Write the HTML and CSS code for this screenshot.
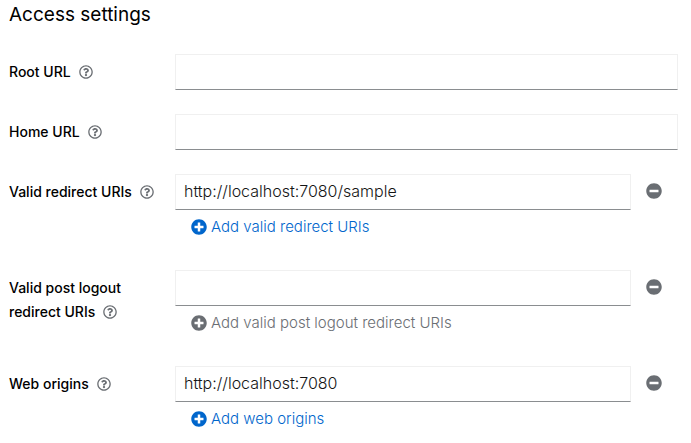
FILE: index.html
```html
<!DOCTYPE html>
<html lang="en">
<head>
<meta charset="utf-8">
<title>Access settings</title>
<link rel="stylesheet" href="styles.css">
</head>
<body>
<svg class="sprite" aria-hidden="true">
  <symbol id="help" viewBox="0 0 512 512"><path d="M256 8C119.043 8 8 119.083 8 256c0 136.997 111.043 248 248 248s248-111.003 248-248C504 119.083 392.957 8 256 8zm0 448c-110.532 0-200-89.431-200-200 0-110.495 89.472-200 200-200 110.491 0 200 89.471 200 200 0 110.53-89.431 200-200 200zm107.244-255.2c0 67.052-72.421 68.084-72.421 92.863V300c0 6.627-5.373 12-12 12h-45.647c-6.627 0-12-5.373-12-12v-8.659c0-35.745 27.1-50.034 47.579-61.516 17.561-9.845 28.324-16.541 28.324-29.579 0-17.246-21.999-28.693-39.784-28.693-23.189 0-33.894 10.977-48.942 29.969-4.057 5.12-11.46 6.071-16.666 2.124l-27.824-21.098c-5.107-3.872-6.251-11.066-2.644-16.363C184.846 131.491 214.94 112 261.794 112c49.071 0 101.45 38.304 101.45 88.8zM298 368c0 23.159-18.841 42-42 42s-42-18.841-42-42 18.841-42 42-42 42 18.841 42 42z"/></symbol>
  <symbol id="plus" viewBox="0 0 512 512"><path d="M256 8C119 8 8 119 8 256s111 248 248 248 248-111 248-248S393 8 256 8zm144 276c0 6.600-5.400 12-12 12h-92v92c0 6.600-5.400 12-12 12h-56c-6.600 0-12-5.400-12-12v-92h-92c-6.600 0-12-5.400-12-12v-56c0-6.600 5.400-12 12-12h92v-92c0-6.600 5.400-12 12-12h56c6.600 0 12 5.400 12 12v92h92c6.600 0 12 5.400 12 12v56z"/></symbol>
  <symbol id="minus" viewBox="0 0 512 512"><path d="M256 8C119 8 8 119 8 256s111 248 248 248 248-111 248-248S393 8 256 8zM124 296c-6.600 0-12-5.400-12-12v-56c0-6.600 5.400-12 12-12h264c6.600 0 12 5.400 12 12v56c0 6.600-5.400 12-12 12H124z"/></symbol>
</svg>
<main class="panel">
  <h1 class="title">Access settings</h1>
  <form class="form">
    <div class="row">
      <div class="label"><label for="root">Root URL</label><button class="help" type="button" aria-label="Help for Root URL"><svg><use href="#help"/></svg></button></div>
      <input class="field" id="root" type="text">
    </div>
    <div class="row">
      <div class="label"><label for="home">Home URL</label><button class="help" type="button" aria-label="Help for Home URL"><svg><use href="#help"/></svg></button></div>
      <input class="field" id="home" type="text">
    </div>
    <div class="row">
      <div class="label"><label for="redirect">Valid redirect URIs</label><button class="help" type="button" aria-label="Help for Valid redirect URIs"><svg><use href="#help"/></svg></button></div>
      <div>
        <div class="entry"><input class="field" id="redirect" type="text" value="http://localhost:7080/sample"><button class="remove" type="button" aria-label="Remove"><svg><use href="#minus"/></svg></button></div>
        <button class="add" type="button"><svg><use href="#plus"/></svg>Add valid redirect URIs</button>
      </div>
    </div>
    <div class="row">
      <div class="label"><label for="logout">Valid post logout redirect URIs</label><button class="help" type="button" aria-label="Help for Valid post logout redirect URIs"><svg><use href="#help"/></svg></button></div>
      <div>
        <div class="entry"><input class="field" id="logout" type="text"><button class="remove" type="button" aria-label="Remove"><svg><use href="#minus"/></svg></button></div>
        <button class="add" type="button" disabled><svg><use href="#plus"/></svg>Add valid post logout redirect URIs</button>
      </div>
    </div>
    <div class="row">
      <div class="label"><label for="origins">Web origins</label><button class="help" type="button" aria-label="Help for Web origins"><svg><use href="#help"/></svg></button></div>
      <div>
        <div class="entry"><input class="field" id="origins" type="text" value="http://localhost:7080"><button class="remove" type="button" aria-label="Remove"><svg><use href="#minus"/></svg></button></div>
        <button class="add" type="button"><svg><use href="#plus"/></svg>Add web origins</button>
      </div>
    </div>
  </form>
</main>
</body>
</html>
```
FILE: styles.css
```css
* { box-sizing: border-box; }
body {
  margin: 0;
  background: #fff;
  color: #151515;
  font: 300 15px/24px Inter, "Liberation Sans", sans-serif;
}
button, input { font: inherit; }
button {
  border: 0;
  background: none;
  color: #6a6e73;
}
svg { fill: currentColor; }
.sprite { display: none; }
.panel { padding: 1px 13px 0 9px; }
.title {
  margin: 0 0 25px;
  font-size: 19px;
  font-weight: 400;
  line-height: 28px;
  color: #000;
}
.form {
  display: grid;
  gap: 24px;
}
.row {
  display: grid;
  grid-template-columns: 150px 1fr;
  column-gap: 16px;
}
.label {
  padding-top: 6px;
  color: #000;
  font-size: 14px;
  font-weight: 500;
}
.help {
  height: 16px;
  margin-left: 8px;
  padding: 0 0 2px;
  vertical-align: middle;
}
.help svg {
  display: block;
  width: 14px;
  height: 14px;
}
.field {
  width: 100%;
  min-width: 0;
  height: 36px;
  padding: 0 8px 2px;
  border: 1px solid #f0f0f0;
  border-bottom-color: #8a8d90;
  border-radius: 0;
  background: #fff;
  color: #151515;
  font-size: 16px;
  outline: 0;
}
.entry { display: flex; }
.remove {
  flex: none;
  padding: 9px 16px 11px 15px;
}
.remove svg {
  display: block;
  width: 16px;
  height: 16px;
}
.add {
  display: flex;
  align-items: center;
  gap: 4px;
  height: 36px;
  padding: 0 16px 2px;
  color: #06c;
}
.add:disabled { color: #6a6e73; }
.add svg {
  width: 16px;
  height: 16px;
}
```
